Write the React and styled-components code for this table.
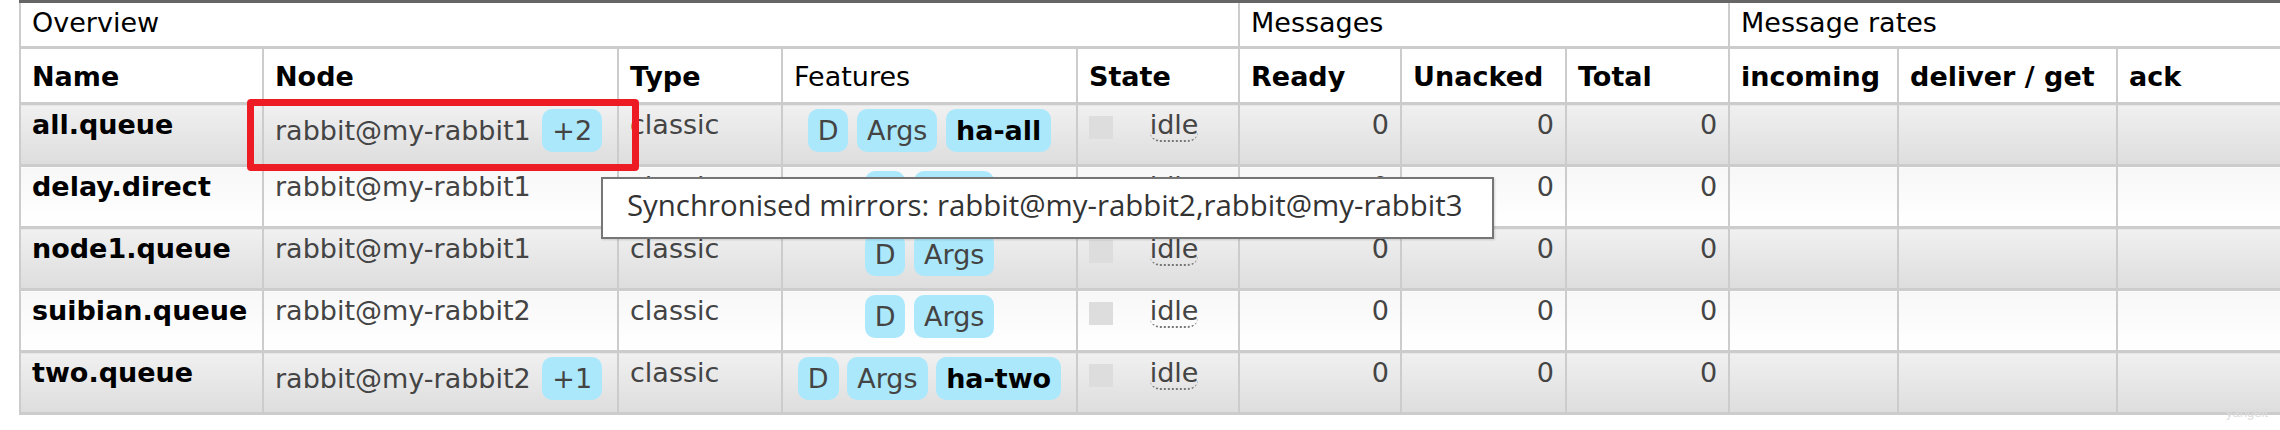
import React from 'react';
import styled, { createGlobalStyle } from 'styled-components';

const Global = createGlobalStyle`
  html, body { margin: 0; padding: 0; background: #fff; overflow: hidden; }
`;

const Page = styled.div`
  position: relative;
  width: 2280px;
  height: 430px;
  overflow: hidden;
  padding-left: 19px;
  box-sizing: border-box;
  font-family: "DejaVu Sans", Verdana, sans-serif;
  font-size: 27px;
`;

const Table = styled.table`
  border-collapse: collapse;
  table-layout: fixed;
  width: ${(p) => p.$width}px;
`;

const GroupTh = styled.th`
  text-align: left;
  font-weight: normal;
  color: #000;
  padding: 4px 11px 8px;
  background: #fff;
  border-top: 3px solid #666;
  border-bottom: 3px solid #ccc;
  border-left: 2px solid #ccc;
  border-right: 2px solid #ccc;
  white-space: nowrap;
`;

const HeadTh = styled.th`
  text-align: left;
  font-weight: ${(p) => (p.$normal ? 'normal' : 'bold')};
  color: #000;
  padding: 12px 11px 10px;
  background: #fff;
  border-top: 3px solid #ccc;
  border-bottom: 3px solid #ccc;
  border-left: 2px solid #ccc;
  border-right: 2px solid #ccc;
  white-space: nowrap;
`;

const Td = styled.td`
  vertical-align: top;
  padding: 4px 11px 12px;
  color: ${(p) => (p.$strong ? '#000' : '#444')};
  font-weight: ${(p) => (p.$strong ? 'bold' : 'normal')};
  text-align: ${(p) => p.$align || 'left'};
  white-space: nowrap;
  overflow: hidden;
  background: ${(p) =>
    p.$alt
      ? 'linear-gradient(#f0f0f0, #dddddd)'
      : 'linear-gradient(#f7f7f7, #ffffff)'};
  border-top: 3px solid #ccc;
  border-bottom: 3px solid #ccc;
  border-left: 2px solid #ccc;
  border-right: 2px solid #ccc;
`;

const Badge = styled.abbr`
  display: inline-block;
  padding: 6px 10px;
  border-radius: 10px;
  background: #abe8fc;
  color: ${(p) => (p.$policy ? '#000' : '#444')};
  font-weight: ${(p) => (p.$policy ? 'bold' : 'normal')};
  text-decoration: none;
  margin-left: ${(p) => (p.$gap ? '3px' : '0')};
`;

const StateWrap = styled.div`
  display: flex;
  align-items: flex-start;
`;

const StatusSquare = styled.span`
  flex: none;
  width: 24px;
  height: 23px;
  margin-top: 7px;
  background: #ddd;
`;

const StateText = styled.span`
  flex: 1;
  text-align: center;
  padding-left: 8px;
`;

const Idle = styled.abbr`
  text-decoration: none;
  border-bottom: 2px dotted #777;
  border-radius: 0 0 10px 10px;
`;

const Tooltip = styled.div`
  position: absolute;
  left: 601px;
  top: 177px;
  width: 893px;
  height: 62px;
  box-sizing: border-box;
  padding: 6px 0 0 24px;
  background: #fff;
  border: 2px solid #767676;
  font-family: "Open Sans", "Noto Sans", sans-serif;
  font-size: 29.4px;
  color: #333;
  white-space: nowrap;
  box-shadow: 1px 1px 2px rgba(0, 0, 0, 0.15);
`;

const Highlight = styled.div`
  position: absolute;
  left: 247px;
  top: 99px;
  width: 392px;
  height: 72px;
  box-sizing: border-box;
  border: 7px solid #ed1c24;
  border-radius: 4px;
  pointer-events: none;
`;

const Watermark = styled.div`
  position: absolute;
  left: 2226px;
  top: 405px;
  font-family: "Liberation Sans", sans-serif;
  font-size: 13px;
  color: #dcdcdc;
`;

const cols = [243, 355, 164, 295, 162, 162, 165, 163, 169, 219, 300];
const tableWidth = cols.reduce((a, b) => a + b, 0);

const rows = [
  { name: 'all.queue', node: 'rabbit@my-rabbit1', plus: '+2', policy: 'ha-all' },
  { name: 'delay.direct', node: 'rabbit@my-rabbit1' },
  { name: 'node1.queue', node: 'rabbit@my-rabbit1' },
  { name: 'suibian.queue', node: 'rabbit@my-rabbit2' },
  { name: 'two.queue', node: 'rabbit@my-rabbit2', plus: '+1', policy: 'ha-two' },
];

export default function App() {
  return (
    <Page>
      <Global />
      <Table $width={tableWidth}>
        <colgroup>
          {cols.map((w, i) => (
            <col key={i} style={{ width: w }} />
          ))}
        </colgroup>
        <thead>
          <tr>
            <GroupTh colSpan={5}>Overview</GroupTh>
            <GroupTh colSpan={3}>Messages</GroupTh>
            <GroupTh colSpan={3}>Message rates</GroupTh>
          </tr>
          <tr>
            <HeadTh>Name</HeadTh>
            <HeadTh>Node</HeadTh>
            <HeadTh>Type</HeadTh>
            <HeadTh $normal>Features</HeadTh>
            <HeadTh>State</HeadTh>
            <HeadTh>Ready</HeadTh>
            <HeadTh>Unacked</HeadTh>
            <HeadTh>Total</HeadTh>
            <HeadTh>incoming</HeadTh>
            <HeadTh>deliver / get</HeadTh>
            <HeadTh>ack</HeadTh>
          </tr>
        </thead>
        <tbody>
          {rows.map((r, i) => {
            const alt = i % 2 === 0;
            return (
              <tr key={r.name}>
                <Td $alt={alt} $strong>{r.name}</Td>
                <Td $alt={alt}>
                  {r.node}
                  {r.plus && (
                    <>
                      {' '}
                      <Badge $gap>{r.plus}</Badge>
                    </>
                  )}
                </Td>
                <Td $alt={alt}>classic</Td>
                <Td $alt={alt} $align="center">
                  <Badge>D</Badge> <Badge>Args</Badge>
                  {r.policy && (
                    <>
                      {' '}
                      <Badge $policy>{r.policy}</Badge>
                    </>
                  )}
                </Td>
                <Td $alt={alt}>
                  <StateWrap>
                    <StatusSquare />
                    <StateText>
                      <Idle>idle</Idle>
                    </StateText>
                  </StateWrap>
                </Td>
                <Td $alt={alt} $align="right">0</Td>
                <Td $alt={alt} $align="right">0</Td>
                <Td $alt={alt} $align="right">0</Td>
                <Td $alt={alt}></Td>
                <Td $alt={alt}></Td>
                <Td $alt={alt}></Td>
              </tr>
            );
          })}
        </tbody>
      </Table>
      <Highlight />
      <Tooltip>Synchronised mirrors: rabbit@my-rabbit2,rabbit@my-rabbit3</Tooltip>
      <Watermark>yangeit</Watermark>
    </Page>
  );
}
